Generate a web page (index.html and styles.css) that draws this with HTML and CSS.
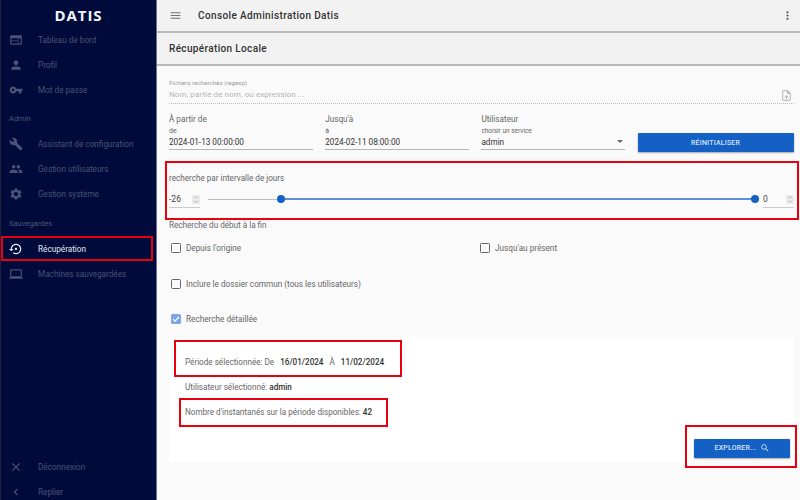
FILE: index.html
```html
<!DOCTYPE html>
<html lang="fr">
<head>
    <meta charset="UTF-8">
    <meta name="viewport" content="width=device-width, initial-scale=1.0">
    <title>Console Administration Datis</title>
    <link rel="stylesheet" href="styles.css">
</head>
<body>
    <div class="app">
        <nav class="sidebar">
            <div class="logo">DATIS</div>
            <a class="nav-item"><svg viewBox="0 0 24 24"><path d="M20 4H4c-1.1 0-1.99.9-1.99 2L2 18c0 1.1.9 2 2 2h16c1.1 0 2-.9 2-2V6c0-1.1-.9-2-2-2zm-5 14H4v-4h11v4zm0-5H4V9h11v4zm5 5h-4V9h4v9z"/></svg>Tableau de bord</a>
            <a class="nav-item"><svg viewBox="0 0 24 24"><path d="M12 12c2.21 0 4-1.79 4-4s-1.79-4-4-4-4 1.79-4 4 1.79 4 4 4zm0 2c-2.67 0-8 1.34-8 4v2h16v-2c0-2.66-5.33-4-8-4z"/></svg>Profil</a>
            <a class="nav-item"><svg viewBox="0 0 24 24"><path d="M12.65 10C11.83 7.67 9.61 6 7 6c-3.31 0-6 2.69-6 6s2.69 6 6 6c2.61 0 4.83-1.67 5.65-4H17v4h4v-4h2v-4H12.65zM7 14c-1.1 0-2-.9-2-2s.9-2 2-2 2 .9 2 2-.9 2-2 2z"/></svg>Mot de passe</a>
            <div class="nav-title">Admin</div>
            <a class="nav-item"><svg viewBox="0 0 24 24"><path d="M22.7 19l-9.1-9.1c.9-2.3.4-5-1.5-6.9-2-2-5-2.4-7.4-1.3L9 6 6 9 1.6 4.7C.4 7.1.9 10.1 2.9 12.1c1.9 1.9 4.6 2.4 6.9 1.5l9.1 9.1c.4.4 1 .4 1.4 0l2.3-2.3c.5-.4.5-1.1.1-1.4z"/></svg>Assistant de configuration</a>
            <a class="nav-item"><svg viewBox="0 0 24 24"><path d="M16 11c1.66 0 2.99-1.34 2.99-3S17.66 5 16 5c-1.66 0-3 1.34-3 3s1.34 3 3 3zm-8 0c1.66 0 2.99-1.34 2.99-3S9.66 5 8 5C6.34 5 5 6.34 5 8s1.34 3 3 3zm0 2c-2.33 0-7 1.17-7 3.5V19h14v-2.5c0-2.33-4.67-3.5-7-3.5zm8 0c-.29 0-.62.02-.97.05 1.16.84 1.97 1.97 1.97 3.45V19h6v-2.5c0-2.33-4.67-3.5-7-3.5z"/></svg>Gestion utilisateurs</a>
            <a class="nav-item"><svg viewBox="0 0 24 24"><path d="M19.14 12.94c.04-.3.06-.61.06-.94 0-.32-.02-.64-.07-.94l2.03-1.58c.18-.14.23-.41.12-.61l-1.92-3.32c-.12-.22-.37-.29-.59-.22l-2.39.96c-.5-.38-1.03-.7-1.62-.94l-.36-2.54c-.04-.24-.24-.41-.48-.41h-3.84c-.24 0-.43.17-.47.41l-.36 2.54c-.59.24-1.13.57-1.62.94l-2.39-.96c-.22-.08-.47 0-.59.22L2.74 8.87c-.12.21-.08.47.12.61l2.03 1.58c-.05.3-.09.63-.09.94s.02.64.07.94l-2.03 1.58c-.18.14-.23.41-.12.61l1.92 3.32c.12.22.37.29.59.22l2.39-.96c.5.38 1.03.7 1.62.94l.36 2.54c.05.24.24.41.48.41h3.84c.24 0 .44-.17.47-.41l.36-2.54c.59-.24 1.13-.56 1.62-.94l2.39.96c.22.08.47 0 .59-.22l1.92-3.32c.12-.22.07-.47-.12-.61l-2.01-1.58zM12 15.6c-1.98 0-3.6-1.62-3.6-3.6s1.62-3.6 3.6-3.6 3.6 1.62 3.6 3.6-1.62 3.6-3.6 3.6z"/></svg>Gestion système</a>
            <div class="nav-title">Sauvegardes</div>
            <a class="nav-item active"><svg viewBox="0 0 24 24"><path d="M14 12c0-1.1-.9-2-2-2s-2 .9-2 2 .9 2 2 2 2-.9 2-2zm-2-9c-4.97 0-9 4.03-9 9H0l4 4 4-4H5c0-3.87 3.13-7 7-7s7 3.13 7 7-3.13 7-7 7c-1.51 0-2.91-.49-4.06-1.3l-1.42 1.44C8.04 20.3 9.94 21 12 21c4.97 0 9-4.03 9-9s-4.03-9-9-9z"/></svg>Récupération</a>
            <a class="nav-item"><svg viewBox="0 0 24 24"><path d="M20 18c1.1 0 1.99-.9 1.99-2L22 6c0-1.1-.9-2-2-2H4c-1.1 0-2 .9-2 2v10c0 1.1.9 2 2 2H0v2h24v-2h-4zM4 6h16v10H4V6z"/></svg>Machines sauvegardées</a>
            <div class="nav-bottom">
                <a class="nav-item"><svg viewBox="0 0 24 24"><path d="M19 6.41L17.59 5 12 10.59 6.41 5 5 6.41 10.59 12 5 17.59 6.41 19 12 13.41 17.59 19 19 17.59 13.41 12z"/></svg>Déconnexion</a>
                <a class="nav-item"><svg viewBox="0 0 24 24"><path d="M15.41 7.41L14 6l-6 6 6 6 1.41-1.41L10.83 12z"/></svg>Replier</a>
            </div>
        </nav>

        <main class="main">
            <header class="topbar">
                <svg class="menu-icon" viewBox="0 0 24 24"><path d="M3 18h18v-2H3v2zm0-5h18v-2H3v2zm0-7v2h18V6H3z"/></svg>
                <span class="app-title">Console Administration Datis</span>
                <svg class="more-icon" viewBox="0 0 24 24"><path d="M12 8c1.1 0 2-.9 2-2s-.9-2-2-2-2 .9-2 2 .9 2 2 2zm0 2c-1.1 0-2 .9-2 2s.9 2 2 2 2-.9 2-2-.9-2-2-2zm0 6c-1.1 0-2 .9-2 2s.9 2 2 2 2-.9 2-2-.9-2-2-2z"/></svg>
            </header>
            <div class="page-title">Récupération Locale</div>

            <section class="content">
                <div class="regexp">
                    <div class="small-label muted">Fichiers recherchés (regexp)</div>
                    <div class="regexp-row">
                        <span class="placeholder">Nom, partie de nom, ou expression ...</span>
                        <svg class="file-icon" viewBox="0 0 24 24"><path d="M14 2H6c-1.1 0-1.99.9-1.99 2L4 20c0 1.1.89 2 1.99 2H18c1.1 0 2-.9 2-2V8l-6-6zm4 18H6V4h7v5h5v11zM8 15.01l1.41 1.41L11 14.84V19h2v-4.16l1.59 1.59L16 15.01 12.01 11 8 15.01z"/></svg>
                    </div>
                </div>

                <div class="filters">
                    <div class="field">
                        <div class="field-title">À partir de</div>
                        <div class="small-label">de</div>
                        <div class="field-value">2024-01-13 00:00:00</div>
                    </div>
                    <div class="field">
                        <div class="field-title">Jusqu'à</div>
                        <div class="small-label">à</div>
                        <div class="field-value">2024-02-11 08:00:00</div>
                    </div>
                    <div class="field">
                        <div class="field-title">Utilisateur</div>
                        <div class="small-label wide">choisir un service</div>
                        <div class="field-value select">admin<span class="caret"></span></div>
                    </div>
                    <button class="btn reset">RÉINITIALISER</button>
                </div>

                <div class="range">
                    <div class="range-label">recherche par intervalle de jours</div>
                    <div class="range-row">
                        <div class="spin">-26<span class="spin-arrows"><svg viewBox="0 0 8 12"><path d="M1.5 4.5L4 2l2.5 2.5M1.5 7.5L4 10l2.5-2.5"/></svg></span></div>
                        <div class="slider">
                            <span class="track off"></span>
                            <span class="thumb"></span>
                            <span class="track on"></span>
                            <span class="thumb"></span>
                        </div>
                        <div class="spin">0<span class="spin-arrows"><svg viewBox="0 0 8 12"><path d="M1.5 4.5L4 2l2.5 2.5M1.5 7.5L4 10l2.5-2.5"/></svg></span></div>
                    </div>
                </div>

                <div class="range-label order">Recherche du début à la fin</div>

                <div class="check-row">
                    <label class="check half"><span class="box"></span>Depuis l'origine</label>
                    <label class="check"><span class="box"></span>Jusqu'au présent</label>
                </div>
                <div class="check-row">
                    <label class="check"><span class="box"></span>Inclure le dossier commun (tous les utilisateurs)</label>
                </div>
                <div class="check-row">
                    <label class="check"><span class="box checked"><svg viewBox="0 0 12 12"><path d="M2.5 6.2l2.4 2.4 4.6-5"/></svg></span>Recherche détaillée</label>
                </div>

                <div class="details">
                    <p class="period">Période sélectionnée: De <b>16/01/2024</b> À <b>11/02/2024</b></p>
                    <p>Utilisateur sélectionné: <b>admin</b></p>
                    <p>Nombre d'instantanés sur la période disponibles: <b>42</b></p>
                    <div class="details-actions">
                        <button class="btn explore">EXPLORER...<svg viewBox="0 0 24 24"><path d="M15.5 14h-.79l-.28-.27C15.41 12.59 16 11.11 16 9.5 16 5.91 13.09 3 9.5 3S3 5.91 3 9.5 5.91 16 9.5 16c1.61 0 3.09-.59 4.23-1.57l.27.28v.79l5 4.99L20.49 19l-4.99-5zm-6 0C7.01 14 5 11.99 5 9.5S7.01 5 9.5 5 14 7.01 14 9.5 11.99 14 9.5 14z"/></svg></button>
                    </div>
                </div>
            </section>
        </main>
    </div>

    <!-- red annotations drawn over the screen -->
    <div class="mark mark-nav"></div>
    <div class="mark mark-range"></div>
    <div class="mark mark-period"></div>
    <div class="mark mark-count"></div>
    <div class="mark mark-explore"></div>
</body>
</html>
```

FILE: styles.css
```css
* {
    box-sizing: border-box;
}

body {
    margin: 0;
    width: 800px;
    height: 500px;
    overflow: hidden;
    position: relative;
    font-family: Roboto, "Liberation Sans", sans-serif;
    background-color: #fafafa;
    color: #333;
}

.app {
    display: flex;
    height: 500px;
}

/* sidebar */
.sidebar {
    width: 157px;
    flex-shrink: 0;
    display: flex;
    flex-direction: column;
    background-color: #000b3b;
    border-left: 1px solid #20233a;
    border-right: 1px solid #6b7390;
    color: #4b5275;
}

.logo {
    height: 27px;
    padding-top: 5px;
    text-align: center;
    color: #f2f3f7;
    font-family: "Open Sans", sans-serif;
    font-size: 15px;
    font-weight: 700;
    line-height: 20px;
    letter-spacing: 0.9px;
}

.nav-item {
    display: flex;
    align-items: center;
    height: 25px;
    padding-left: 8px;
    font-size: 8.2px;
}

.nav-item svg {
    width: 14px;
    height: 14px;
    margin-right: 15px;
    fill: #4b5275;
}

.nav-item.active {
    color: #e6e8f0;
}

.nav-item.active svg {
    fill: #e6e8f0;
}

.nav-title {
    height: 29.5px;
    padding: 12px 0 0 8px;
    font-size: 7.5px;
    line-height: 10px;
    color: #4f5679;
}

.nav-bottom {
    margin-top: auto;
    margin-bottom: -4px;
}

/* header */
.main {
    flex: 1;
    min-width: 0;
    display: flex;
    flex-direction: column;
}

.topbar {
    display: flex;
    align-items: center;
    height: 33px;
    padding: 0 6px 1px 12px;
    background-color: #f2f2f2;
    border-bottom: 2px solid #b9b9b9;
}

.menu-icon {
    width: 13px;
    height: 13px;
    margin-right: 16px;
    fill: #6f6f6f;
}

.app-title {
    flex: 1;
    font-size: 10px;
    font-weight: 500;
    letter-spacing: 0.38px;
    color: #333;
}

.more-icon {
    width: 13px;
    height: 13px;
    fill: #54566b;
}

.page-title {
    height: 33px;
    padding-left: 12px;
    line-height: 31px;
    background-color: #f2f2f2;
    border-bottom: 2px solid #b9b9b9;
    font-size: 10px;
    font-weight: 500;
    letter-spacing: 0.35px;
    color: #333;
}

/* form */
.content {
    flex: 1;
    padding: 12px 6px 0 12px;
}

.small-label {
    font-size: 7px;
    line-height: 10px;
    color: #666;
}

.small-label.wide {
    font-size: 6.5px;
}

.small-label.muted {
    color: #9a9a9a;
    font-size: 6.2px;
}

.regexp {
    height: 26px;
    border-bottom: 1px dotted #bbb;
}

.regexp-row {
    display: flex;
    align-items: center;
    justify-content: space-between;
    height: 12px;
    padding-right: 1px;
}

.placeholder {
    font-size: 8px;
    letter-spacing: 0.1px;
    color: #b5b5b5;
}

.file-icon {
    width: 13px;
    height: 13px;
    margin-top: 3px;
    fill: #bcbcbc;
}

.filters {
    display: flex;
    align-items: flex-end;
    gap: 12.7px;
    padding-top: 9px;
}

.field {
    width: 143.5px;
}

.field-title {
    font-size: 8.2px;
    line-height: 13px;
    color: #666;
}

.field-value {
    display: flex;
    align-items: center;
    justify-content: space-between;
    height: 14px;
    padding-bottom: 2px;
    font-size: 8.2px;
    color: #333;
    border-bottom: 1px solid #b5b5b5;
}

.select {
    padding-right: 2px;
}

.caret {
    border-left: 3px solid transparent;
    border-right: 3px solid transparent;
    border-top: 3px solid #666;
}

.btn {
    display: flex;
    align-items: center;
    justify-content: center;
    border: none;
    border-radius: 1px;
    background-color: #1560c4;
    color: #d6e4f7;
    font-family: inherit;
    font-size: 7px;
    font-weight: 500;
    letter-spacing: 0.2px;
    box-shadow: 0 1px 2px rgba(0, 0, 0, 0.35);
}

.reset {
    width: 156px;
    height: 19px;
    margin-bottom: -2px;
}

/* day range */
.range {
    padding-top: 22px;
}

.range-label {
    font-size: 8.15px;
    line-height: 12px;
    color: #666;
}

.range-row {
    display: flex;
    align-items: flex-start;
    margin-top: 8px;
}

.spin {
    display: flex;
    justify-content: space-between;
    align-items: center;
    width: 31px;
    height: 16px;
    padding-bottom: 1px;
    font-size: 8.5px;
    color: #444;
    border-bottom: 1px solid #ccc;
}

.spin-arrows {
    display: flex;
    align-items: center;
    justify-content: center;
    width: 8px;
    height: 9px;
    background-color: #ebebeb;
}

.spin-arrows svg {
    width: 6px;
    height: 9px;
    fill: none;
    stroke: #999;
    stroke-width: 0.9;
}

.slider {
    flex: 1;
    display: flex;
    align-items: center;
    height: 14px;
    margin: 0 4px 0 8px;
}

.track {
    height: 1px;
}

.track.off {
    width: 69px;
    background-color: #bdbdbd;
}

.track.on {
    flex: 1;
    height: 2px;
    background-color: #5b90d8;
}

.thumb {
    flex-shrink: 0;
    width: 8px;
    height: 8px;
    border-radius: 50%;
    background-color: #1560c4;
}

.order {
    margin-top: 11px;
}

/* checkboxes */
.check-row {
    display: flex;
    height: 35.5px;
    padding-left: 2px;
}

.order + .check-row {
    margin-top: 10px;
}

.check {
    display: flex;
    align-items: center;
    height: 14px;
    font-size: 8.2px;
    color: #666;
}

.half {
    width: 309px;
}

.box {
    width: 10px;
    height: 10px;
    margin-right: 5px;
    border: 1.3px solid #666;
    border-radius: 1.5px;
}

.box.checked {
    display: flex;
    border: none;
    background-color: #7ea6e8;
}

.box svg {
    fill: none;
    stroke: #fff;
    stroke-width: 1.4;
}

/* result panel */
.details {
    height: 125px;
    margin-top: -11px;
    padding: 20px 4px 0 16px;
    background-color: #fff;
    font-size: 8.15px;
    color: #666;
}

.details p {
    margin: 0 0 14px 0;
    line-height: 11px;
}

.details b {
    font-weight: 500;
    color: #333;
}

.period b {
    margin: 0 4px;
}

.details-actions {
    display: flex;
    justify-content: flex-end;
    margin-top: 21px;
}

.explore {
    width: 96px;
    height: 19px;
    gap: 3px;
}

.explore svg {
    width: 10px;
    height: 10px;
    fill: #d6e4f7;
}

/* annotations */
.mark {
    position: absolute;
    border: 2px solid #e8000f;
}

.mark-nav {
    left: 1px;
    top: 236px;
    width: 152px;
    height: 25px;
}

.mark-range {
    left: 165px;
    top: 161px;
    width: 634px;
    height: 59px;
}

.mark-period {
    left: 174px;
    top: 340px;
    width: 228px;
    height: 37px;
}

.mark-count {
    left: 179px;
    top: 398px;
    width: 209px;
    height: 29px;
}

.mark-explore {
    left: 685px;
    top: 425px;
    width: 112px;
    height: 43px;
}
```
